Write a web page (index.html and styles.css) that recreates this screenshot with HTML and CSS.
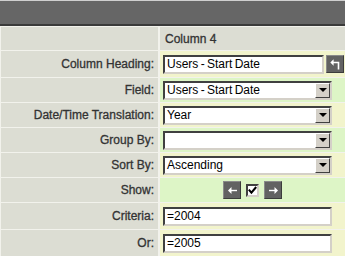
FILE: index.html
```html
<!DOCTYPE html>
<html lang="en">
<head>
  <meta charset="UTF-8" />
  <title>Report Column Editor</title>
  <link rel="stylesheet" href="styles.css">
</head>
<body>

<div class="topbar"></div>

<div class="grid">
  <div class="label"></div>
  <div class="value head">Column 4</div>

  <div class="label">Column Heading:</div>
  <div class="value yellow">
    <input class="field heading-input" type="text" value="Users - Start Date">
    <button class="dark-btn" title="Reset heading">
      <svg width="11" height="11" viewBox="0 0 11 11"><path d="M8.5 10.5V3.5H2.5" fill="none" stroke="#fff" stroke-width="1.6"/><path d="M0.3 3.5L3.6 0.2V6.8Z" fill="#fff"/></svg>
    </button>
  </div>

  <div class="label">Field:</div>
  <div class="value green">
    <div class="field combo"><span class="combo-text">Users - Start Date</span><span class="combo-arrow"></span></div>
  </div>

  <div class="label">Date/Time Translation:</div>
  <div class="value yellow">
    <div class="field combo"><span class="combo-text">Year</span><span class="combo-arrow"></span></div>
  </div>

  <div class="label">Group By:</div>
  <div class="value green">
    <div class="field combo"><span class="combo-text"></span><span class="combo-arrow"></span></div>
  </div>

  <div class="label">Sort By:</div>
  <div class="value yellow">
    <div class="field combo"><span class="combo-text">Ascending</span><span class="combo-arrow"></span></div>
  </div>

  <div class="label">Show:</div>
  <div class="value green show">
    <button class="dark-btn" title="Move left">
      <svg width="9" height="7" viewBox="0 0 9 7"><path d="M3 3.5H9" stroke="#fff" stroke-width="1.4"/><path d="M0 3.5L3.5 0V7Z" fill="#fff"/></svg>
    </button>
    <span class="check">
      <svg width="9" height="9" viewBox="0 0 9 9"><path d="M0.8 3.6L3.4 6.6L8.2 1" fill="none" stroke="#000" stroke-width="2"/></svg>
    </span>
    <button class="dark-btn" title="Move right">
      <svg width="9" height="7" viewBox="0 0 9 7"><path d="M0 3.5H6" stroke="#fff" stroke-width="1.4"/><path d="M9 3.5L5.5 0V7Z" fill="#fff"/></svg>
    </button>
  </div>

  <div class="label">Criteria:</div>
  <div class="value yellow">
    <input class="field wide" type="text" value="=2004">
  </div>

  <div class="label">Or:</div>
  <div class="value yellow">
    <input class="field wide" type="text" value="=2005">
  </div>
</div>

</body>
</html>
```

FILE: styles.css
```css
body {
  margin: 0;
  font-family: "Liberation Sans", Arial, sans-serif;
  font-size: 12px;
  background: #f2f2ec;
}

.topbar {
  height: 23px;
  background: #666666;
  border-top: 1px solid #cfcfcf;
  border-bottom: 2px solid #3a3a3a;
}

.grid {
  display: grid;
  grid-template-columns: 157px 1fr;
  grid-template-rows: 23px 26px 24px 24px 24px 24px 24px 26px 26px;
  gap: 1px 2px;
  padding: 1px 0 0 1px;
  background: #f2f2ec;
}

/* labels look heavier in the original (cleartype) */
.label {
  display: flex;
  align-items: center;
  justify-content: flex-end;
  padding-right: 4px;
  background: #dcddd3;
  color: #333;
  -webkit-text-stroke: 0.3px #333;
}

.value {
  display: flex;
  align-items: center;
  gap: 2px;
  padding-left: 3px;
}

.head {
  background: #dcddd3;
  color: #333;
  -webkit-text-stroke: 0.3px #333;
  padding-left: 5px;
}

.yellow { background: #f2f4cc; }
.green { background: #ddf5c6; }

.field {
  box-sizing: border-box;
  height: 19px;
  margin: 0;
  padding: 0 2px;
  border: 2px solid;
  border-color: #404040 #d4d0c8 #d4d0c8 #404040;
  background: #fff;
  font: 12px "Liberation Sans", Arial, sans-serif;
  word-spacing: -1px;
  color: #000;
  outline: none;
}

.heading-input { width: 161px; }
.wide { width: 169px; }

.combo {
  display: flex;
  width: 169px;
  padding: 0;
}

.combo-text {
  flex: 1;
  padding-left: 2px;
  line-height: 15px;
}

.combo-arrow {
  box-sizing: border-box;
  width: 15px;
  background: #d4d0c8;
  border: 1px solid;
  border-color: #fff #404040 #404040 #fff;
  display: flex;
  align-items: center;
  justify-content: center;
}

.combo-arrow::after {
  content: "";
  border-left: 4px solid transparent;
  border-right: 4px solid transparent;
  border-top: 4px solid #000;
}

.dark-btn {
  box-sizing: border-box;
  width: 18px;
  height: 18px;
  margin: 0;
  padding: 0;
  background: #626262;
  border: 1px solid;
  border-color: #8a8a8a #3c3c3c #3c3c3c #8a8a8a;
  display: flex;
  align-items: center;
  justify-content: center;
  cursor: pointer;
}

.show {
  justify-content: center;
  gap: 5px;
  padding-left: 0;
}

.check {
  box-sizing: border-box;
  width: 13px;
  height: 13px;
  background: #fff;
  border: 2px solid;
  border-color: #404040 #d4d0c8 #d4d0c8 #404040;
  display: flex;
  align-items: center;
  justify-content: center;
}
```
